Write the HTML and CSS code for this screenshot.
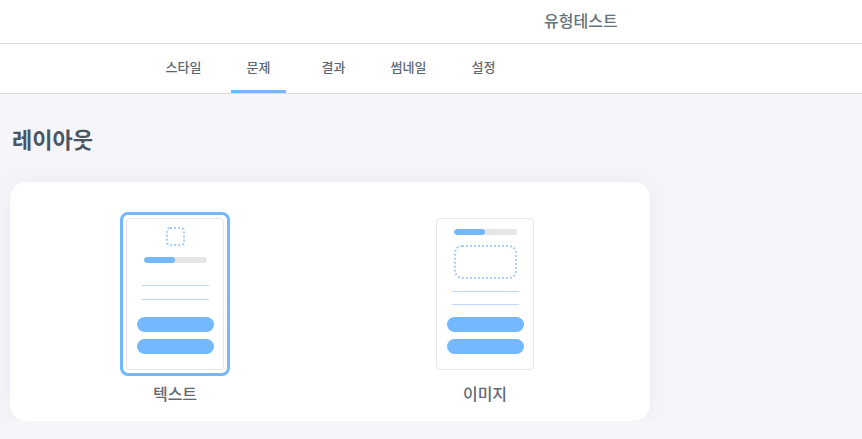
FILE: index.html
```html
<!DOCTYPE html>
<html lang="ko">
<head>
  <meta charset="UTF-8">
  <meta name="viewport" content="width=device-width, initial-scale=1.0">
  <title>유형테스트</title>
  <link rel="stylesheet" href="styles.css">
</head>
<body>
  <header class="top-bar">
    <span class="top-title">유형테스트</span>
  </header>
  <nav class="tabs">
    <div class="tab">스타일</div>
    <div class="tab active">문제</div>
    <div class="tab">결과</div>
    <div class="tab">썸네일</div>
    <div class="tab">설정</div>
  </nav>

  <main class="content">
    <h2 class="section-title">레이아웃</h2>
    <div class="layout-card">
      <div class="option">
        <div class="frame selected">
          <div class="thumb thumb-text">
            <div class="dot-square"></div>
            <div class="progress"><span></span></div>
            <div class="rule rule-first"></div>
            <div class="rule"></div>
            <div class="pill pill-first"></div>
            <div class="pill"></div>
          </div>
        </div>
        <div class="option-label">텍스트</div>
      </div>
      <div class="option">
        <div class="frame">
          <div class="thumb thumb-image">
            <div class="progress"><span></span></div>
            <div class="dot-box"></div>
            <div class="rule"></div>
            <div class="rule"></div>
            <div class="pill"></div>
            <div class="pill pill-second"></div>
          </div>
        </div>
        <div class="option-label">이미지</div>
      </div>
    </div>
  </main>
</body>
</html>
```

FILE: styles.css
```css
body {
  margin: 0;
  background: #f6f6fa;
  font-family: "Noto Sans CJK KR", "Noto Sans", sans-serif;
  color: #5c6770;
}

.top-bar {
  height: 43px;
  background: #fff;
  border-bottom: 1px solid #dcdcdc;
  display: flex;
  align-items: center;
  padding-left: 544px;
}

.top-title {
  font-size: 16px;
  font-weight: 500;
  color: #66717a;
  margin-top: -4px;
}

.tabs {
  height: 49px;
  background: #fff;
  border-bottom: 1px solid #dcdcdc;
  display: flex;
  padding-left: 146px;
}

.tab {
  width: 55px;
  margin: 0 10px;
  box-sizing: border-box;
  border-bottom: 3px solid transparent;
  display: flex;
  justify-content: center;
  align-items: center;
  padding-bottom: 2px;
  font-size: 13px;
  font-weight: 500;
  color: #5c6770;
}

.tab.active {
  border-bottom-color: #74b9ff;
}

.content {
  padding: 29px 0 0 10px;
}

.section-title {
  margin: 0 0 29px 2px;
  font-size: 22px;
  line-height: 30px;
  font-weight: 700;
  color: #4a5661;
}

.layout-card {
  width: 640px;
  height: 239px;
  box-sizing: border-box;
  background: #fff;
  border-radius: 16px;
  box-shadow: 0 0 24px rgba(60, 60, 100, 0.07);
  display: grid;
  grid-template-columns: 310px 310px;
  padding: 30px 10px 0;
}

.option {
  display: flex;
  flex-direction: column;
  align-items: center;
}

.frame {
  padding: 3px;
  border: 3px solid transparent;
  border-radius: 8px;
}

.frame.selected {
  border-color: #74b9ff;
}

.thumb {
  width: 96px;
  height: 150px;
  border: 1px solid #e6e6e6;
  border-radius: 4px;
  background: #fff;
  display: flex;
  flex-direction: column;
  align-items: center;
}

.thumb-text {
  padding-top: 8px;
  box-sizing: content-box;
  height: 142px;
}

.thumb-image {
  padding-top: 10px;
  box-sizing: content-box;
  height: 140px;
}

.dot-square {
  width: 15px;
  height: 15px;
  border: 2px dotted #a6cffb;
  border-radius: 4px;
  margin-bottom: 11px;
}

.progress {
  width: 63px;
  height: 6px;
  border-radius: 3px;
  background: #e6e6e6;
  overflow: hidden;
  flex-shrink: 0;
}

.progress span {
  display: block;
  width: 50%;
  height: 100%;
  border-radius: 3px;
  background: #74b9ff;
}

.dot-box {
  width: 59px;
  height: 30px;
  border: 2px dotted #a6cffb;
  border-radius: 8px;
  margin: 10px 0 12px;
  flex-shrink: 0;
}

.rule {
  width: 67px;
  height: 1px;
  background: #b9dafc;
  margin-bottom: 12px;
  flex-shrink: 0;
}

.thumb-text .rule-first {
  margin-top: 22px;
}

.thumb-text .rule {
  margin-bottom: 13px;
}

.thumb-text .rule + .rule {
  margin-bottom: 17px;
}

.pill {
  width: 77px;
  height: 15px;
  border-radius: 8px;
  background: #74b9ff;
  flex-shrink: 0;
}

.pill + .pill {
  margin-top: 7px;
}

.option-label {
  margin-top: 6px;
  font-size: 16px;
  line-height: 22px;
  font-weight: 500;
  color: #5f6a73;
}
```
